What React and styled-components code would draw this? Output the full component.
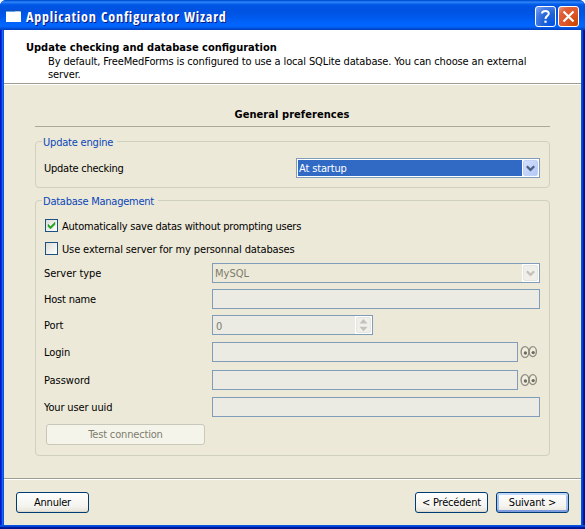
import React from "react";
import styled, { createGlobalStyle } from "styled-components";

const face = "#ece9d8";
const fieldBorder = "#7f9db9";

const Global = createGlobalStyle`
  *, *::before, *::after { box-sizing: border-box; }
  html, body { margin: 0; padding: 0; background: #fff; }
  body {
    overflow: hidden;
    font: 11px/13px "DejaVu Sans Condensed", "DejaVu Sans", sans-serif;
    color: #000;
  }
`;

const Window = styled.div`
  width: 585px;
  height: 529px;
  display: flex;
  flex-direction: column;
  border-radius: 6px 6px 0 0;
  overflow: hidden;
  background: linear-gradient(90deg, #0019cf 0 1px, #0831d9 1px 2px, #166aee 2px 3px, #0855dd 3px 582px, #0441d8 582px 583px, #001da0 583px 584px, #00138c 584px);
`;

const TitleBar = styled.header`
  height: 30px;
  flex: none;
  display: flex;
  align-items: center;
  gap: 2px;
  padding: 3px 6px 0;
  background: linear-gradient(180deg, #0050d0 0, #0058e0 1px, #3c8cf8 2px, #1c74f4 3px, #0560ea 4px, #0054e3 6px, #0053e1 11px, #0057ea 16px, #0062fa 22px, #0166ff 26px, #0260f4 27px, #0148cc 29px, #0040c0 30px);
`;

const Title = styled.h1`
  flex: 1;
  margin: 1px 0 0 3px;
  font: 700 14px/18px "Open Sans Condensed", "Open Sans", sans-serif;
  letter-spacing: 0.81px;
  color: #fff;
  text-shadow: 1px 1px 0 #0a1883;
  white-space: nowrap;
`;

const CaptionButton = styled.button`
  width: 21px;
  height: 21px;
  padding: 0;
  display: grid;
  place-items: center;
  border: 1px solid #fff;
  border-radius: 3px;
  background: ${(p) =>
    p.$danger
      ? "radial-gradient(circle at 90% 90%, #cc4600 0%, #dc5527 45%, #e0603a 75%, #e89b88 100%)"
      : "radial-gradient(circle at 90% 90%, #0054e9 0%, #2263d5 45%, #4479e4 70%, #84a8f4 100%)"};
`;

const Body = styled.main`
  flex: 1;
  margin: 0 4px;
  display: flex;
  flex-direction: column;
  background: ${face};
`;

const Banner = styled.section`
  height: 55px;
  padding: 11px 21px 0 22px;
  background: #fff;
  border-bottom: 1px solid #fff;
  box-shadow: inset 0 -1px 0 #9d9d92;
`;

const Text = styled.span`
  letter-spacing: ${(p) => p.$track || 0}px;
  white-space: nowrap;
`;

const BannerTitle = styled.h2`
  margin: 0;
  font-size: 11px;
  line-height: 13px;
`;

const BannerText = styled.p`
  margin: 1px 0 0 22px;
  line-height: 13px;
`;

const Page = styled.section`
  flex: 1;
  padding: 23px 31px 0;
`;

const PageTitle = styled.h2`
  margin: 0;
  height: 19px;
  padding-right: 1px;
  text-align: center;
  font-size: 11px;
  line-height: 13px;
  border-bottom: 1px solid #aca899;
`;

const Group = styled.fieldset`
  height: ${(p) => p.$height}px;
  margin: ${(p) => p.$gap}px 0 0;
  padding: 0;
  min-width: 0;
  border: 1px solid #d0d0bf;
  border-radius: 4px;
`;

const Legend = styled.legend`
  height: 13px;
  margin-left: 6px;
  padding: 0 4px 0 1px;
  line-height: 15px;
  color: #0a46b8;
`;

const FormRow = styled.div`
  height: 20px;
  margin: ${(p) => p.$gap}px 9px 0 8px;
  display: grid;
  grid-template-columns: ${(p) => p.$label || 168}px 1fr;
  align-items: center;
`;

const CheckRow = styled.label`
  height: 13px;
  margin: ${(p) => p.$gap}px 0 0 9px;
  display: flex;
  align-items: center;
  gap: 4px;
  line-height: 15px;
`;

const CheckBox = styled.span`
  width: 13px;
  height: 13px;
  display: grid;
  place-items: center;
  border: 1px solid #1c5180;
  background: linear-gradient(135deg, #dcdcd7, #fff);
`;

const CheckLabel = styled.span`
  padding-top: 2px;
`;

const Control = styled.div`
  height: 20px;
  width: ${(p) => (p.$width ? p.$width + "px" : "100%")};
  padding: 1px;
  display: flex;
  border: 1px solid ${fieldBorder};
  background: ${(p) => (p.$kind === "active" ? "#fff" : p.$kind === "combo" ? face : "#ebebe4")};
  color: ${(p) => (p.$kind === "active" ? "#fff" : "#7d7b6c")};
`;

const Value = styled.span`
  flex: 1;
  padding: ${(p) => p.$top ?? 1}px 0 0 ${(p) => p.$left ?? 1}px;
  line-height: 15px;
  background: ${(p) => (p.$selected ? "#316ac5" : "transparent")};
`;

const ArrowWell = styled.span`
  width: 17px;
  margin: -1px;
  padding: 1px;
  display: flex;
  background: #fff;
`;

const ArrowFace = styled.span`
  flex: 1;
  display: grid;
  place-items: center;
  border-radius: 2px;
  border: 1px solid ${(p) => (p.$disabled ? "#e6e6e0" : "#c0d0f8")};
  background: ${(p) => (p.$disabled ? "#f0efe9" : "linear-gradient(135deg, #d4e0fe, #b4c8f6)")};
`;

const FieldWithToggle = styled.div`
  display: grid;
  grid-template-columns: 306px 18px;
  column-gap: 2px;
  align-items: center;
`;

const PushButton = styled.button`
  height: 21px;
  width: ${(p) => p.$width || 73}px;
  padding: 0;
  font: inherit;
  color: ${(p) => (p.$disabled ? "#7d7c70" : "#000")};
  border: 1px solid ${(p) => (p.$disabled ? "#c9c7ba" : "#003c74")};
  border-radius: 3px;
  background: ${(p) => (p.$disabled ? "#f5f4ea" : "linear-gradient(180deg, #fff, #f4f3ee 70%, #e6e3d8)")};
  box-shadow: ${(p) =>
    p.$primary
      ? "inset 0 2px 0 #c2d8fa, inset 0 -2px 0 #7d9ce0, inset 2px 0 0 #a6c0f0, inset -2px 0 0 #a6c0f0"
      : p.$disabled
      ? "none"
      : "inset 0 -1px 0 #dcd8cc"};
`;

const TestButton = styled(PushButton)`
  display: block;
  margin: 7px 0 0 10px;
`;

const Footer = styled.footer`
  height: 47px;
  flex: none;
  padding: 13px 12px 0;
  display: flex;
  gap: 8px;
  border-top: 1px solid #9d9d92;
  box-shadow: inset 0 1px 0 #fff;
`;

const Spacer = styled.span`
  flex: 1;
`;

const BottomEdge = styled.div`
  height: 4px;
  flex: none;
  background: linear-gradient(180deg, #0855dd 0 1px, #0441d8 1px 2px, #001da0 2px 3px, #00138c 3px);
`;

const WindowIcon = () => (
  <svg width="15" height="14" viewBox="0 0 15 14" shapeRendering="crispEdges">
    <rect y="1" width="15" height="11" fill="#fff" />
    <rect width="15" height="1" fill="#1c50b0" />
    <rect y="1" width="15" height="1" fill="#5ea4f0" />
    <rect x="9" y="1" width="5" height="1" fill="#a8c8e8" />
  </svg>
);

const HelpGlyph = () => (
  <svg width="13" height="15" viewBox="0 0 13 15" fill="none">
    <path d="M3 4.6C3 1.2 9.8 1 9.8 4.5C9.8 7 6.5 6.8 6.5 10" stroke="#fff" strokeWidth="2" />
    <rect x="5.4" y="11.6" width="2.2" height="2.2" fill="#fff" />
  </svg>
);

const CloseGlyph = () => (
  <svg width="13" height="13" viewBox="0 0 13 13">
    <path d="M1.5 1.5L11.5 11.5M11.5 1.5L1.5 11.5" stroke="#fff" strokeWidth="2.2" />
  </svg>
);

const CheckGlyph = () => (
  <svg width="9" height="9" viewBox="0 0 9 9">
    <path d="M1 3V5.5L3.5 8L8 3.5V1L3.5 5.5Z" fill="#21a121" stroke="#21a121" strokeWidth="0.4" />
  </svg>
);

const Chevron = ({ color }) => (
  <svg width="9" height="7" viewBox="0 0 9 7">
    <path d="M0.8 1.2L4.5 4.9L8.2 1.2" fill="none" stroke={color} strokeWidth="2.3" />
  </svg>
);

const SpinArrows = () => (
  <svg width="9" height="14" viewBox="0 0 9 14">
    <path d="M0.5 5.4L4.5 1L8.5 5.4ZM0.5 8.8L4.5 13.2L8.5 8.8Z" fill="#c4c3ba" />
  </svg>
);

const Eyes = () => (
  <svg width="18" height="14" viewBox="0 0 18 14">
    <g fill="#f0efdf" stroke="#8f8d7e" strokeWidth="1.4">
      <ellipse cx="5" cy="7" rx="3.9" ry="5.4" />
      <ellipse cx="12.8" cy="6.6" rx="3.6" ry="5" />
    </g>
    <circle cx="5.4" cy="8" r="1.7" fill="#6f6d62" />
    <circle cx="13.2" cy="7.6" r="1.7" fill="#6f6d62" />
  </svg>
);

const TextField = () => <Control $kind="field" />;

export default function App() {
  return (
    <>
      <Global />
      <Window>
        <TitleBar>
          <WindowIcon />
          <Title>Application Configurator Wizard</Title>
          <CaptionButton aria-label="Help"><HelpGlyph /></CaptionButton>
          <CaptionButton $danger aria-label="Close"><CloseGlyph /></CaptionButton>
        </TitleBar>
        <Body>
          <Banner>
            <BannerTitle><Text>Update checking and database configuration</Text></BannerTitle>
            <BannerText>
              <Text $track={-0.13}>By default, FreeMedForms is configured to use a local SQLite database. You can choose an external</Text>
              <br />
              <Text $track={-0.12}>server.</Text>
            </BannerText>
          </Banner>
          <Page>
            <PageTitle><Text $track={0.06}>General preferences</Text></PageTitle>
            <Group $height={53} $gap={8}>
              <Legend><Text $track={-0.2}>Update engine</Text></Legend>
              <FormRow $label={252} $gap={10}>
                <Text $track={-0.25}>Update checking</Text>
                <Control $kind="active">
                  <Value $selected><Text $track={-0.15}>At startup</Text></Value>
                  <ArrowWell><ArrowFace><Chevron color="#4d6185" /></ArrowFace></ArrowWell>
                </Control>
              </FormRow>
            </Group>
            <Group $height={262} $gap={6}>
              <Legend><Text $track={-0.24}>Database Management</Text></Legend>
              <CheckRow $gap={12}>
                <CheckBox><CheckGlyph /></CheckBox>
                <CheckLabel><Text $track={-0.22}>Automatically save datas without prompting users</Text></CheckLabel>
              </CheckRow>
              <CheckRow $gap={10}>
                <CheckBox />
                <CheckLabel><Text $track={-0.13}>Use external server for my personnal databases</Text></CheckLabel>
              </CheckRow>
              <FormRow $gap={8}>
                <Text $track={-0.03}>Server type</Text>
                <Control $kind="combo">
                  <Value>MySQL</Value>
                  <ArrowWell><ArrowFace $disabled><Chevron color="#c4c3ba" /></ArrowFace></ArrowWell>
                </Control>
              </FormRow>
              <FormRow $gap={6}>
                <Text $track={-0.2}>Host name</Text>
                <TextField />
              </FormRow>
              <FormRow $gap={6}>
                <Text $track={-0.1}>Port</Text>
                <Control $kind="field" $width={161}>
                  <Value $left={2} $top={2}>0</Value>
                  <ArrowWell><ArrowFace $disabled><SpinArrows /></ArrowFace></ArrowWell>
                </Control>
              </FormRow>
              <FormRow $gap={7}>
                <Text $track={-0.12}>Login</Text>
                <FieldWithToggle><TextField /><Eyes /></FieldWithToggle>
              </FormRow>
              <FormRow $gap={8}>
                <Text $track={0}>Password</Text>
                <FieldWithToggle><TextField /><Eyes /></FieldWithToggle>
              </FormRow>
              <FormRow $gap={7}>
                <Text $track={-0.15}>Your user uuid</Text>
                <TextField />
              </FormRow>
              <TestButton $disabled $width={159}><Text $track={-0.17}>Test connection</Text></TestButton>
            </Group>
          </Page>
          <Footer>
            <PushButton><Text $track={-0.22}>Annuler</Text></PushButton>
            <Spacer />
            <PushButton><Text $track={-0.2}>&lt; Précédent</Text></PushButton>
            <PushButton $primary><Text $track={-0.15}>Suivant &gt;</Text></PushButton>
          </Footer>
        </Body>
        <BottomEdge />
      </Window>
    </>
  );
}
